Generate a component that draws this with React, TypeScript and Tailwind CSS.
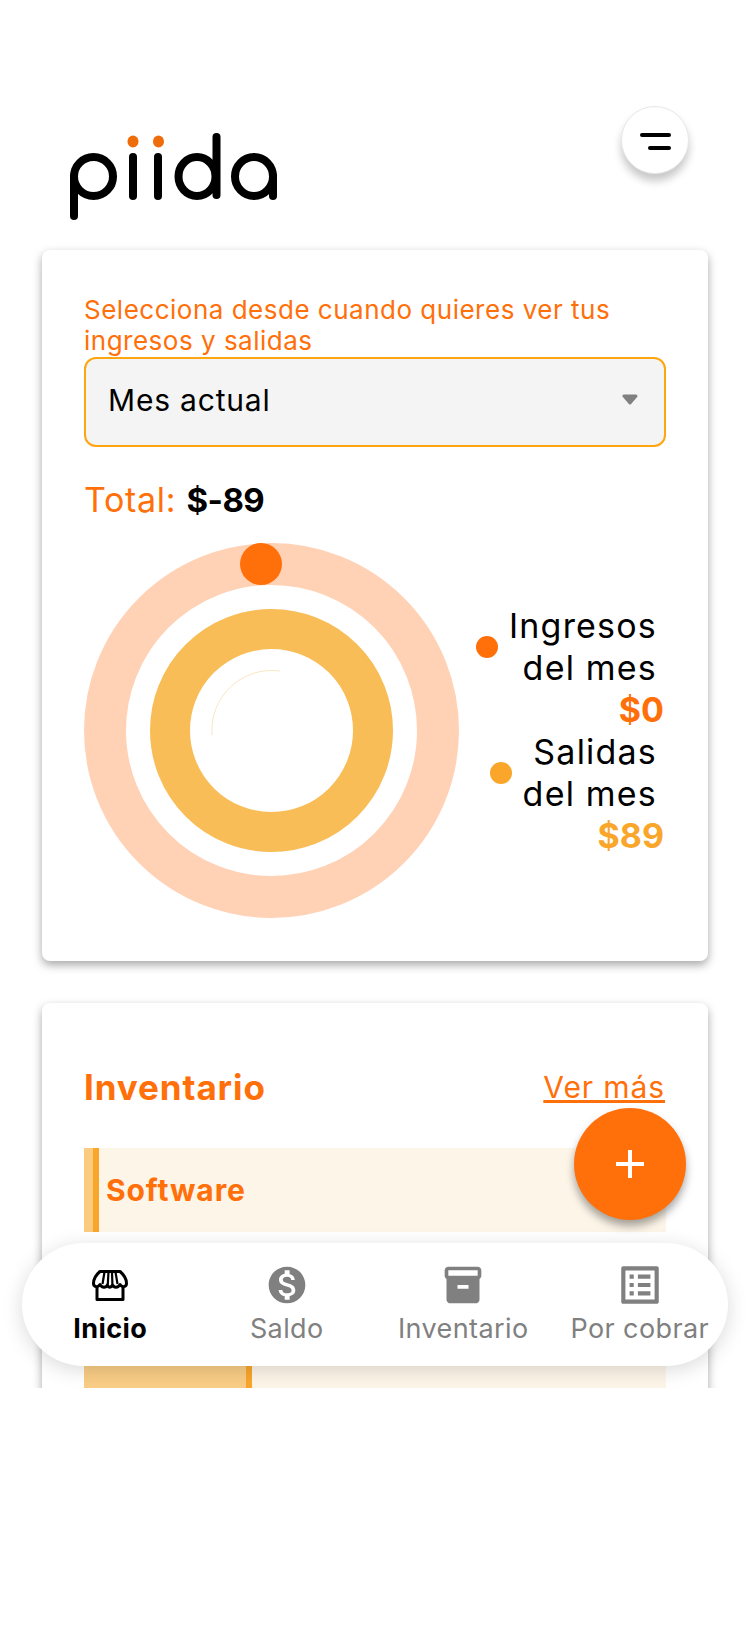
import { MdMonetizationOn, MdInventory2, MdOutlineListAlt, MdAdd } from "react-icons/md";

const font = "[font-family:Inter,'Liberation_Sans',sans-serif]";

function Logo() {
  return (
    <svg width="208" height="88" viewBox="0 0 208 88" className="mt-[27px]">
      <g fill="none" stroke="#000" strokeWidth="8" strokeLinecap="round">
        <path d="M4 83V43" />
        <ellipse cx="23.5" cy="43.5" rx="19.5" ry="19.5" />
        <path d="M63 63V24" />
        <path d="M88 63V24" />
        <ellipse cx="127" cy="43.5" rx="18.5" ry="19.5" />
        <path d="M146.5 4V62" />
        <ellipse cx="184" cy="43.5" rx="19" ry="19.5" />
        <path d="M203 43V63" />
      </g>
      <ellipse cx="63" cy="8.5" rx="5.5" ry="6" fill="#EF6C0C" />
      <ellipse cx="88.5" cy="8.5" rx="5.5" ry="6" fill="#EF6C0C" />
    </svg>
  );
}

function Chart() {
  return (
    <svg width="375" height="375" viewBox="0 0 375 375" className="shrink-0">
      <circle cx="187.5" cy="187.5" r="166.5" fill="none" stroke="#FFD1B5" strokeWidth="42" />
      <circle cx="187.5" cy="187.5" r="101.5" fill="none" stroke="#F9BD58" strokeWidth="40" />
      <circle cx="177" cy="21" r="21" fill="#FF6F0A" />
      <path d="M128 192A60 60 0 0 1 196 128" fill="none" stroke="#FBE6C4" strokeWidth="1" />
    </svg>
  );
}

function StoreIcon() {
  return (
    <svg width="36" height="31" viewBox="0 0 36 31" fill="none" stroke="currentColor" strokeWidth="3" strokeLinejoin="round">
      <path d="M8 1.5H28C31 4 34.5 9 34.5 13.5C34.5 17 30 18 28 14.5C26 18 22 18 20.5 15C19 18 16.5 18 15.5 15C14 18 10 18 8 14.5C6 18 1.5 17 1.5 13.5C1.5 9 5 4 8 1.5Z" />
      <path d="M12.5 2L10.5 14M16.5 2L15.8 14M20 2L20.4 14M23.5 2L25.5 14" strokeWidth="2.2" />
      <path d="M5 17V29.5H31V17" />
    </svg>
  );
}

function LegendRow({ dot, first, amount, amountClass }: { dot: string; first: string; amount: string; amountClass: string }) {
  return (
    <div className="flex flex-col items-end">
      <div className="flex items-center gap-[11px]">
        <span className={`h-[22px] w-[22px] rounded-full ${dot}`} />
        <div className="pr-[7px] text-right text-[34px] leading-[42px] tracking-[1.2px] text-black">
          {first}
          <br />
          del mes
        </div>
      </div>
      <div className={`text-[34px] leading-[42px] font-bold ${amountClass}`}>{amount}</div>
    </div>
  );
}

const nav = [
  { label: "Inicio", icon: <StoreIcon />, active: true },
  { label: "Saldo", icon: <MdMonetizationOn className="h-[44px] w-[44px]" />, active: false },
  { label: "Inventario", icon: <MdInventory2 className="h-[44px] w-[44px]" />, active: false },
  { label: "Por cobrar", icon: <MdOutlineListAlt className="h-[50px] w-[50px] shrink-0" />, active: false },
];

export default function App() {
  return (
    <div className={`h-[1644px] bg-white ${font}`}>
      <div className="relative h-[1388px] overflow-hidden px-[42px]">
        <header className="flex h-[250px] items-start justify-between pt-[106px] pr-[19px] pl-[28px]">
          <Logo />
          <button className="flex h-[68px] w-[68px] items-center justify-center rounded-full border border-[#e8e8e8] bg-white pt-[3px] shadow-[0_7px_9px_rgba(0,0,0,0.22)]">
            <span className="flex flex-col items-end gap-[9px]">
              <span className="h-[4px] w-[31px] rounded-full bg-black" />
              <span className="h-[4px] w-[23px] rounded-full bg-black" />
            </span>
          </button>
        </header>

        <section className="h-[711px] rounded-lg bg-white px-[42px] pt-[44px] shadow-[0_4px_10px_rgba(0,0,0,0.35)]">
          <p className="text-[26px] leading-[31px] tracking-[0.5px] text-[#FF6F0A]">
            Selecciona desde cuando quieres ver tus ingresos y salidas
          </p>
          <div className="mt-[1px] flex h-[90px] w-[582px] items-center justify-between rounded-xl border-2 border-[#FFA50F] bg-[#F4F4F4] pr-[26px] pb-[3px] pl-[22px] text-[30px] tracking-[0.8px] text-black">
            <span>Mes actual</span>
            <svg width="16" height="11" viewBox="0 0 16 11" className="-mt-[2px]">
              <path d="M2 2H14L8 9Z" fill="#808080" stroke="#808080" strokeWidth="3" strokeLinejoin="round" />
            </svg>
          </div>
          <p className="mt-[32px] text-[34px] leading-[42px] tracking-[0.7px] text-[#FF6F0A]">
            Total: <span className="text-[33px] font-bold tracking-[-0.6px] text-black">$-89</span>
          </p>
          <div className="mt-[22px] flex">
            <Chart />
            <div className="flex flex-1 flex-col items-end pt-[62px] pr-[2px]">
              <LegendRow dot="bg-[#FF6F0A]" first="Ingresos" amount="$0" amountClass="text-[#FF6F0A]" />
              <LegendRow dot="bg-[#F9A62B]" first="Salidas" amount="$89" amountClass="text-[#F9A62B]" />
            </div>
          </div>
        </section>

        <section className="mt-[42px] h-[600px] rounded-lg bg-white px-[42px] pt-[63px] shadow-[0_4px_10px_rgba(0,0,0,0.35)]">
          <div className="flex items-center justify-between">
            <h2 className="text-[35px] leading-[42px] font-bold tracking-[0.9px] text-[#FF6F0A]">Inventario</h2>
            <a className="pr-[1px] text-[30px] leading-[40px] tracking-[0.9px] text-[#FF6F0A] underline">Ver más</a>
          </div>
          <div className="mt-[40px] flex h-[84px] bg-[#FDF5E8]">
            <span className="w-[9px] bg-[#FBCB80]" />
            <span className="w-[6px] bg-[#F9A62B]" />
            <span className="self-center pl-[7px] text-[30px] font-bold tracking-[0.9px] text-[#FF6F0A]">Software</span>
          </div>
          <div className="mt-[16px] flex h-[160px] bg-[#FDF5E8]">
            <span className="w-[162px] bg-[#F9CD85]" />
            <span className="w-[6px] bg-[#F9A62B]" />
          </div>
        </section>

        <button className="absolute top-[1108px] left-[574px] flex h-[112px] w-[112px] items-center justify-center rounded-full bg-[#FF6F0A] shadow-[0_6px_8px_rgba(0,0,0,0.35)]">
          <MdAdd className="h-[48px] w-[48px] text-white" />
        </button>

        <nav className="absolute top-[1243px] left-[22px] grid h-[123px] w-[706px] grid-cols-4 rounded-[62px] bg-white shadow-[0_4px_20px_rgba(0,0,0,0.15)]">
          {nav.map(({ label, icon, active }) => (
            <div key={label} className={`flex flex-col items-center pt-[20px] ${active ? "text-black" : "text-[#808080]"}`}>
              <span className="flex h-[44px] items-center justify-center">{icon}</span>
              <span className={`mt-[5px] text-[27px] leading-[34px] tracking-[0.4px] whitespace-nowrap ${active ? "font-bold" : ""}`}>{label}</span>
            </div>
          ))}
        </nav>
      </div>
    </div>
  );
}
